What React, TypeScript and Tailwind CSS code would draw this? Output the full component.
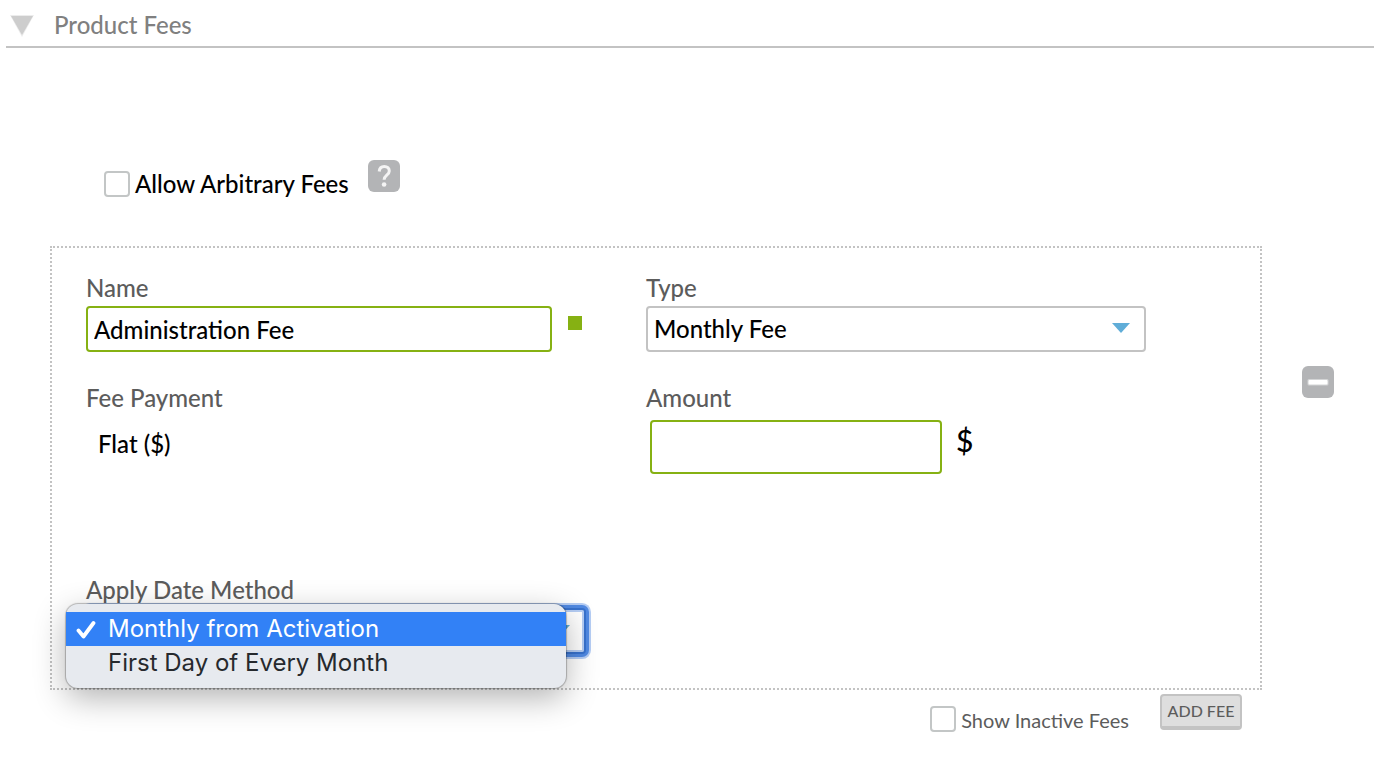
import React, { useState } from "react";

const APPLY_METHODS = ["Monthly from Activation", "First Day of Every Month"];

interface CheckboxProps {
  id: string;
  label: string;
  className?: string;
}

function Checkbox({ id, label, className = "" }: CheckboxProps) {
  return (
    <div className="flex items-center gap-[5px]">
      <input
        id={id}
        type="checkbox"
        className="size-[26px] shrink-0 appearance-none rounded border-2 border-[#c3c6c6] bg-white checked:bg-[#86b113]"
      />
      <label htmlFor={id} className={className}>
        {label}
      </label>
    </div>
  );
}

interface FieldProps {
  id: string;
  label: string;
  children: React.ReactNode;
}

function Field({ id, label, children }: FieldProps) {
  return (
    <div>
      <label htmlFor={id} className="mb-0.5 block text-2xl leading-8 text-[#5c5c5c]">
        {label}
      </label>
      {children}
    </div>
  );
}

function SelectArrow() {
  return (
    <svg
      className="pointer-events-none absolute top-4 right-4 h-[11px] w-[18px]"
      viewBox="0 0 18 11"
      fill="#60add8"
    >
      <path d="M0 1h18L9 11z" />
    </svg>
  );
}

export default function App() {
  const [open, setOpen] = useState(true);
  const [method, setMethod] = useState(APPLY_METHODS[0]);

  return (
    <main className="bg-white pb-8 font-['Lato',sans-serif] font-medium text-black">
      <header className="ml-1.5 flex h-12 items-center border-b-2 border-[#c3c3c3] pt-1">
        <button type="button" aria-label="Collapse section" className="ml-1">
          <svg className="h-6 w-6" viewBox="0 0 24 24">
            <path d="M0 2h24L12 24z" fill="#cfcfcf" opacity="0.4" />
            <path d="M1 3h22L12 22z" fill="#cdcdcd" />
          </svg>
        </button>
        <h1 className="ml-5 text-2xl leading-8 text-[#808080]">Product Fees</h1>
      </header>

      <div className="mt-28 ml-[104px] flex items-start gap-[19px]">
        <div className="pt-2">
          <Checkbox id="arbitrary" label="Allow Arbitrary Fees" className="text-2xl leading-8" />
        </div>
        <button type="button" aria-label="Help">
          <svg className="size-8" viewBox="0 0 32 32">
            <rect width="32" height="32" rx="6" fill="#b3b4b6" />
            <path
              d="M11.2 11.5c.3-3.2 2.3-5 5.1-5 3 0 5 1.800 5 4.400 0 4.300-5.200 4.300-5.200 8.900"
              fill="none"
              stroke="#f4f4f4"
              strokeWidth="3"
            />
            <circle cx="16.100" cy="24.500" r="2.300" fill="#f4f4f4" />
          </svg>
        </button>
      </div>

      <div className="mt-[46px] flex items-center gap-10 pr-10 pl-[50px]">
        <section className="min-w-0 flex-1 border-2 border-dotted border-[#c3c3c3] pt-6 pr-[54px] pb-[34px] pl-[34px]">
          <div className="grid grid-cols-2">
            <Field id="name" label="Name">
              <div className="flex items-start gap-4">
                <input
                  id="name"
                  type="text"
                  defaultValue="Administration Fee"
                  className="h-[46px] w-[466px] rounded border-2 border-[#86b113] px-1.5 text-2xl"
                />
                <span className="mt-2.5 size-3.5 bg-[#86b113]" />
              </div>
            </Field>
            <Field id="type" label="Type">
              <div className="relative w-[500px]">
                <select
                  id="type"
                  className="h-[46px] w-full appearance-none rounded border-2 border-[#c3c3c3] bg-white px-1.5 text-2xl"
                >
                  <option>Monthly Fee</option>
                </select>
                <SelectArrow />
              </div>
            </Field>
          </div>

          <div className="mt-[30px] grid grid-cols-2">
            <div>
              <h2 className="mb-0.5 text-2xl leading-8 text-[#5c5c5c]">Fee Payment</h2>
              <p className="pt-3 pl-3 text-2xl leading-8">Flat ($)</p>
            </div>
            <Field id="amount" label="Amount">
              <div className="flex items-start gap-3.5 pt-1 pl-1">
                <input
                  id="amount"
                  type="text"
                  className="h-[54px] w-[292px] rounded border-2 border-[#86b113] px-1.5 text-2xl"
                />
                <span className="text-3xl leading-10">$</span>
              </div>
            </Field>
          </div>

          <div className="mt-[100px] grid grid-cols-2">
            <Field id="method" label="Apply Date Method">
              <div className="relative w-[500px]">
                <select
                  id="method"
                  value={method}
                  onChange={(e) => setMethod(e.target.value)}
                  className="h-[46px] w-full appearance-none rounded border-2 border-[#3872cd] bg-white px-1.5 text-2xl shadow-[inset_0_0_0_2px_#b5cdf4,0_0_0_3px_#5089e2,0_0_0_5px_#b5cdf4]"
                >
                  {APPLY_METHODS.map((item) => (
                    <option key={item}>{item}</option>
                  ))}
                </select>
                <SelectArrow />

                {open && (
                  <ul
                    role="listbox"
                    aria-label="Apply Date Method"
                    className="absolute -top-1 -left-5 w-full rounded-xl bg-[#e7eaef] py-2 font-['Inter',sans-serif] text-2xl font-normal shadow-[0_0_1px_1px_rgba(0,0,0,0.25),0_10px_32px_rgba(0,0,0,0.3)]"
                  >
                    {APPLY_METHODS.map((item) => (
                      <li key={item} role="option" aria-selected={item === method}>
                        <button
                          type="button"
                          onClick={() => {
                            setMethod(item);
                            setOpen(false);
                          }}
                          className={
                            item === method
                              ? "flex h-[34px] w-full items-center bg-[#3281f6] pl-2.5 text-white"
                              : "flex h-[34px] w-full items-center pl-2.5 text-[#26292d]"
                          }
                        >
                          <span className="w-8">
                            {item === method && (
                              <svg className="size-5" viewBox="0 0 20 20" fill="none">
                                <path
                                  d="M2.500 11.500l5 6L17.500 4"
                                  stroke="currentColor"
                                  strokeWidth="3.800"
                                  strokeLinecap="round"
                                  strokeLinejoin="round"
                                />
                              </svg>
                            )}
                          </span>
                          {item}
                        </button>
                      </li>
                    ))}
                  </ul>
                )}
              </div>
            </Field>
          </div>
        </section>

        <button type="button" aria-label="Remove fee" className="mb-[172px]">
          <svg className="size-8" viewBox="0 0 32 32">
            <rect width="32" height="32" rx="6" fill="#b3b4b6" />
            <rect x="5.500" y="13" width="21" height="6.500" rx="1.500" fill="#d3d4d5" />
            <rect x="6.500" y="14" width="19" height="4.500" rx="1" fill="#fff" />
          </svg>
        </button>
      </div>

      <footer className="mt-1 flex items-start justify-end gap-[31px] pr-[132px]">
        <div className="pt-3">
          <Checkbox
            id="inactive"
            label="Show Inactive Fees"
            className="pt-0.5 text-xl leading-6 font-normal text-[#5c5c5c]"
          />
        </div>
        <button
          type="button"
          className="h-9 w-[82px] rounded border-2 border-b-4 border-[#c3c3c3] bg-[#dedede] text-base text-[#5c5c5c]"
        >
          ADD FEE
        </button>
      </footer>
    </main>
  );
}
